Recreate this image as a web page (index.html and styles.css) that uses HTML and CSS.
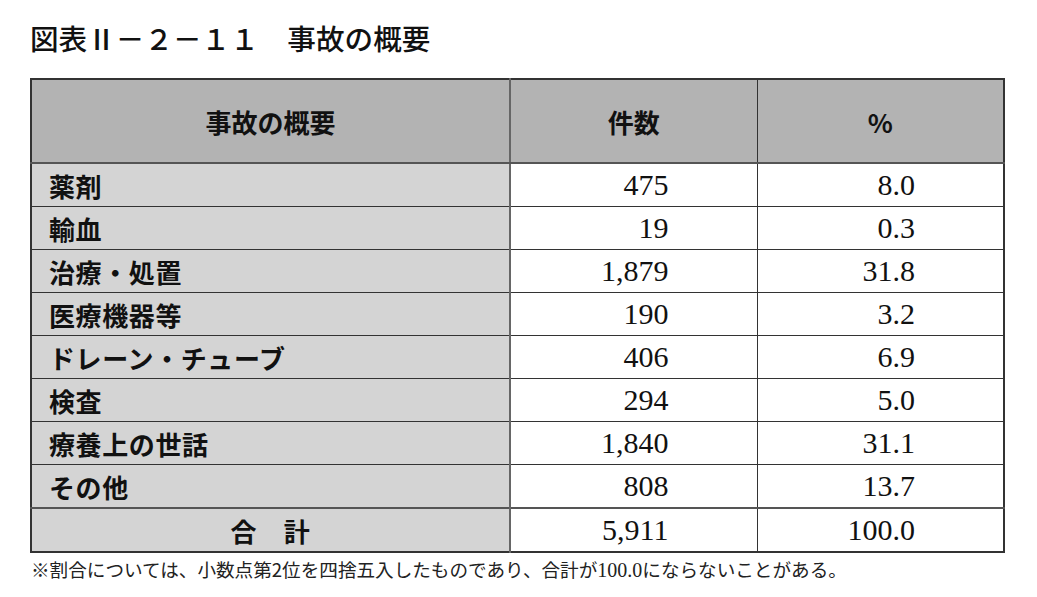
FILE: index.html
```html
<!DOCTYPE html>
<html lang="ja">
<head>
<meta charset="utf-8">
<link rel="stylesheet" href="styles.css">
</head>
<body>
<div class="page">
  <h1 class="title">図表Ⅱ－２－１１　事故の概要</h1>
  <table class="tbl">
    <colgroup>
      <col class="c1"><col class="c2"><col class="c3">
    </colgroup>
    <thead>
      <tr class="head"><th class="lab">事故の概要</th><th>件数</th><th>%</th></tr>
    </thead>
    <tbody>
      <tr><th class="lab">薬剤</th><td>475</td><td>8.0</td></tr>
      <tr><th class="lab">輸血</th><td>19</td><td>0.3</td></tr>
      <tr><th class="lab">治療・処置</th><td>1,879</td><td>31.8</td></tr>
      <tr><th class="lab">医療機器等</th><td>190</td><td>3.2</td></tr>
      <tr><th class="lab">ドレーン・チューブ</th><td>406</td><td>6.9</td></tr>
      <tr><th class="lab">検査</th><td>294</td><td>5.0</td></tr>
      <tr><th class="lab">療養上の世話</th><td>1,840</td><td>31.1</td></tr>
      <tr><th class="lab">その他</th><td>808</td><td>13.7</td></tr>
      <tr class="total"><th class="lab">合　計</th><td>5,911</td><td>100.0</td></tr>
    </tbody>
  </table>
  <p class="note">※割合については、小数点第2位を四捨五入したものであり、合計が<span class="num">100.0</span>にならないことがある。</p>
</div>
</body>
</html>
```
FILE: styles.css
```css
html, body {
  margin: 0;
  padding: 0;
  background: #ffffff;
}
body {
  font-family: "Noto Sans CJK JP", "Noto Sans", sans-serif;
  color: #111;
}
.page {
  padding: 22px 0 0 30px;
}
.title {
  margin: 0 0 24px 0;
  font-size: 28.6px;
  line-height: 32px;
  font-weight: 500;
}
.tbl {
  border-collapse: collapse;
  table-layout: fixed;
  width: 973px;
  border: 2px solid #333;
}
.c1 { width: 479px; }
.c2 { width: 247px; }
.c3 { width: 247px; }
.tbl th, .tbl td {
  border: 1px solid #333;
  padding: 0;
}
.head th {
  height: 82px;
  background: #b3b3b3;
  font-size: 26px;
  font-weight: 700;
  text-align: center;
  border-bottom: 2px solid #555;
}
.tbl tbody th, .tbl tbody td {
  height: 42px;
}
.tbl tbody th.lab {
  background: #d4d4d4;
  text-align: left;
  padding-left: 17px;
  font-size: 26px;
  font-weight: 700;
  letter-spacing: 0.6px;
}
.tbl th.lab {
  border-right: 2px solid #666;
}
.tbl td {
  text-align: right;
  padding-right: 88px;
  font-family: "Liberation Serif", "Times New Roman", serif;
  font-size: 30px;
  line-height: 30px;
}
.tbl tr.total th.lab {
  text-align: center;
  padding-left: 0;
  border-top: 2px solid #555;
}
.tbl tr.total td {
  border-top: 2px solid #555;
}
.note {
  margin: 3px 0 0 1px;
  font-size: 18.6px;
  line-height: 26px;
  color: #222;
}
.note .num {
  font-family: "Liberation Serif", serif;
  font-size: 20px;
}
```
